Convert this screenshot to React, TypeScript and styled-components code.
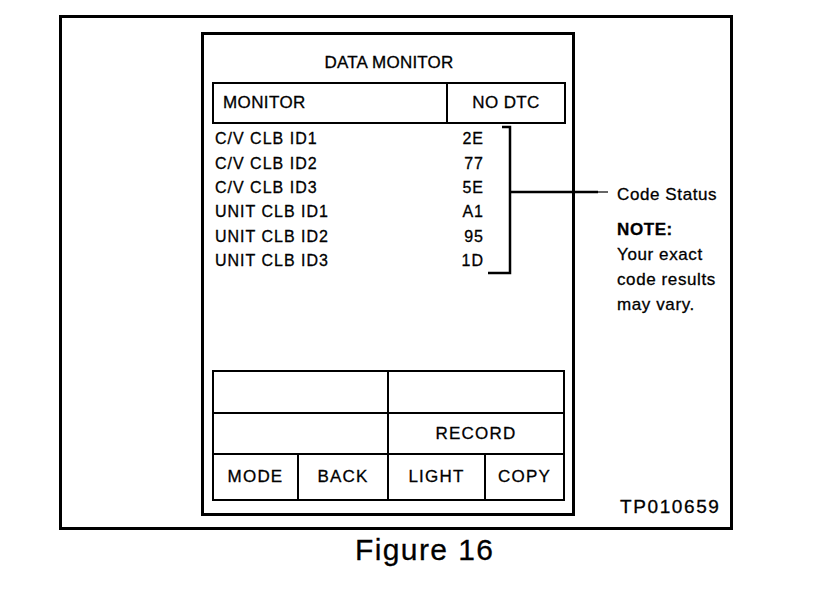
import React from 'react';
import styled, { createGlobalStyle } from 'styled-components';

const GlobalStyle = createGlobalStyle`
    html, body {
        margin: 0;
        padding: 0;
        background: #fff;
    }
    body {
        font-family: 'Liberation Sans', Arial, sans-serif;
        color: #000;
        -webkit-text-stroke: 0.3px #000;
    }
`;

const rows = [
    { label: 'C/V CLB ID1', value: '2E' },
    { label: 'C/V CLB ID2', value: '77' },
    { label: 'C/V CLB ID3', value: '5E' },
    { label: 'UNIT CLB ID1', value: 'A1' },
    { label: 'UNIT CLB ID2', value: '95' },
    { label: 'UNIT CLB ID3', value: '1D' },
];

const App = () => {
    return (
        <Page>
            <GlobalStyle />
            <Frame>
                <Screen>
                    <Title>DATA MONITOR</Title>
                    <HeaderBox>
                        <HeaderMain>MONITOR</HeaderMain>
                        <HeaderSide>NO DTC</HeaderSide>
                    </HeaderBox>
                    <DataList>
                        {rows.map((row) => (
                            <React.Fragment key={row.label}>
                                <DataLabel>{row.label}</DataLabel>
                                <DataValue>{row.value}</DataValue>
                            </React.Fragment>
                        ))}
                    </DataList>
                    <Keys>
                        <Key $span={2} />
                        <Key $span={2} />
                        <Key $span={2} />
                        <Key $span={2}>RECORD</Key>
                        <Key>MODE</Key>
                        <Key>BACK</Key>
                        <Key>LIGHT</Key>
                        <Key>COPY</Key>
                    </Keys>
                </Screen>
                <Notes>
                    <NoteLine $top={164}>Code Status</NoteLine>
                    <NoteBlock>
                        <NoteTitle>NOTE:</NoteTitle>
                        <NoteLine>Your exact</NoteLine>
                        <NoteLine>code results</NoteLine>
                        <NoteLine>may vary.</NoteLine>
                    </NoteBlock>
                    <PartNumber>TP010659</PartNumber>
                </Notes>
                <Bracket width="124" height="150" viewBox="0 0 124 150">
                    <g stroke="#000" strokeWidth="2.5" fill="none">
                        <polyline points="16,2 24,2 24,148 2,148" />
                        <line x1="24" y1="67" x2="112" y2="67" />
                    </g>
                    <line x1="110" y1="67" x2="122" y2="67" stroke="#000" strokeWidth="1.2" />
                </Bracket>
            </Frame>
            <Caption>Figure 16</Caption>
        </Page>
    );
};

export default App;

const Page = styled.div`
    width: 816px;
    height: 614px;
    padding: 15px 0 0 59px;
    box-sizing: border-box;
    overflow: hidden;
`;

const Frame = styled.div`
    position: relative;
    display: flex;
    width: 674px;
    height: 515px;
    box-sizing: border-box;
    border: 3px solid #000;
    padding: 14px 0 0 139px;
`;

const Screen = styled.div`
    display: flex;
    flex-direction: column;
    width: 374px;
    height: 484px;
    box-sizing: border-box;
    border: 3px solid #000;
    padding: 0 6px 12px 8px;
`;

const Title = styled.div`
    height: 47px;
    box-sizing: border-box;
    padding-top: 18px;
    line-height: 20px;
    font-size: 17px;
    text-align: center;
    letter-spacing: 0.2px;
`;

const HeaderBox = styled.div`
    display: flex;
    height: 42px;
    box-sizing: border-box;
    border: 2px solid #000;
    font-size: 17px;
    letter-spacing: 0.4px;
`;

const HeaderMain = styled.div`
    flex: 1;
    display: flex;
    align-items: center;
    padding-left: 9px;
    border-right: 2px solid #000;
`;

const HeaderSide = styled.div`
    width: 116px;
    display: flex;
    align-items: center;
    justify-content: center;
`;

const DataList = styled.div`
    display: grid;
    grid-template-columns: 1fr auto;
    grid-auto-rows: 24.4px;
    align-items: center;
    width: 271px;
    padding-left: 3px;
    margin-top: 3px;
    font-size: 16px;
    letter-spacing: 1px;
`;

const DataLabel = styled.span``;

const DataValue = styled.span`
    text-align: right;
    margin-right: 2px;
`;

const Keys = styled.div`
    display: grid;
    grid-template-columns: 83px 88px 95px 77px;
    grid-template-rows: 40px 39px 44px;
    gap: 2px;
    padding: 2px;
    width: 353px;
    box-sizing: border-box;
    margin-top: auto;
    background: #000;
`;

const Key = styled.div<{ $span?: number }>`
    grid-column: span ${(p) => p.$span ?? 1};
    display: flex;
    align-items: center;
    justify-content: center;
    background: #fff;
    font-size: 17px;
    letter-spacing: 1.2px;
`;

const Notes = styled.div`
    display: flex;
    flex-direction: column;
    margin-left: 42px;
    margin-top: -14px;
    padding-bottom: 8px;
    font-size: 17px;
    letter-spacing: 0.6px;
`;

const NoteLine = styled.div<{ $top?: number }>`
    line-height: 25px;
    margin-top: ${(p) => p.$top ?? 0}px;
`;

const NoteBlock = styled.div`
    margin-top: 10px;
`;

const NoteTitle = styled.div`
    line-height: 25px;
    font-weight: 700;
`;

const PartNumber = styled.div`
    margin-top: auto;
    padding-left: 3px;
    line-height: 24px;
    font-size: 19px;
    letter-spacing: 1.6px;
`;

const Bracket = styled.svg`
    position: absolute;
    left: 424px;
    top: 107px;
    pointer-events: none;
`;

const Caption = styled.div`
    margin: 4px 0 0 296px;
    font-size: 30px;
    line-height: 32px;
    letter-spacing: 1.4px;
`;
